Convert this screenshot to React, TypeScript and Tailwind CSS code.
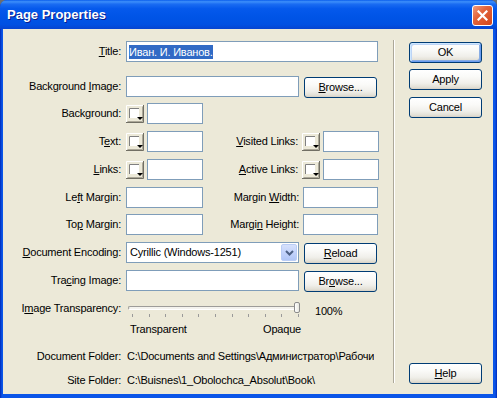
import React from "react";

function Btn({ children, def = false }: { children: React.ReactNode; def?: boolean }) {
  return (
    <div
      className={
        "flex h-[21px] w-[73px] shrink-0 items-center justify-center rounded-[3px] border border-[#003C74] bg-[linear-gradient(180deg,#FFFFFF_0%,#FAFAF8_35%,#F0EFEA_70%,#E3E0D6_90%,#D6D0C5_100%)] leading-none " +
        (def
          ? "[box-shadow:inset_1px_1px_0_#CEE7FF,inset_-1px_-1px_0_#6A9CF0,inset_2px_2px_0_#BCD4F6,inset_-2px_-2px_0_#89ADE4]"
          : "")
      }
    >
      <span>{children}</span>
    </div>
  );
}

function Input({ w }: { w: string }) {
  return <div className={"h-[21px] shrink-0 border border-[#7F9DB9] bg-white " + w} />;
}

function Swatch() {
  return (
    <svg width="18" height="18" viewBox="0 0 18 18" className="shrink-0">
      <rect x="0" y="0" width="18" height="18" fill="#ECE9D8" />
      <path d="M0.5 17 V0.5 H17" stroke="#FFFFFF" fill="none" />
      <path d="M0 17.5 H17.5 V0" stroke="#716F64" fill="none" />
      <path d="M1.5 16.5 H16.5 V1.5" stroke="#ACA899" fill="none" />
      <rect x="3" y="3" width="10" height="10" fill="#FFFFFF" />
      <path d="M3.5 13 V3.5 H13" stroke="#808080" fill="none" />
      <path d="M11 12 H17 L14 15 Z" fill="#000000" />
    </svg>
  );
}

function Label({ children, w = "w-[118px]" }: { children: React.ReactNode; w?: string }) {
  return <div className={"shrink-0 text-right leading-[13px] whitespace-nowrap " + w}>{children}</div>;
}

export default function App() {
  return (
    <div className="h-[398px] w-[497px] bg-[#6E6E6E] font-['Liberation_Sans',Arial,sans-serif] text-[11px] tracking-[-0.2px] text-black">
      <div className="flex h-full flex-col overflow-hidden rounded-t-[7px] bg-[linear-gradient(90deg,#0029B8_0px,#0A55E8_2px,#0A55E8_calc(100%-2px),#0029B8_100%)]">
        {/* Title bar */}
        <div className="flex h-[29px] shrink-0 items-start bg-[linear-gradient(180deg,#0A5DEC_0%,#3D8FFA_6%,#1A6CF2_14%,#0559EC_30%,#0054E6_60%,#0050E2_85%,#0644D0_100%)] pl-[7px] pr-[4px]">
          <div className="mt-[7px] text-[13px] font-bold leading-[16px] tracking-normal text-white [text-shadow:1px_1px_0_#0A1E8C]">
            Page Properties
          </div>
          <div className="ml-auto mt-[5px] flex h-[21px] w-[21px] items-center justify-center rounded-[3px] border border-white bg-[linear-gradient(135deg,#F09C7E_0%,#E2633B_40%,#D2461C_100%)]">
            <svg width="11" height="11" viewBox="0 0 11 11">
              <path d="M1.5 1.5 L9.5 9.5 M9.5 1.5 L1.5 9.5" stroke="#FFFFFF" strokeWidth="2.2" strokeLinecap="square" />
            </svg>
          </div>
        </div>

        {/* Client area */}
        <div className="mb-[4px] ml-[3px] mr-[4px] flex flex-1 bg-[#ECE9D8]">
          {/* Left panel */}
          <div className="flex w-[390px] shrink-0 flex-col">
            {/* Title */}
            <div className="mt-[12px] flex h-[21px] items-center gap-[5px]">
              <Label>
                <u>T</u>itle:
              </Label>
              <div className="flex h-[21px] w-[252px] shrink-0 items-center border border-[#7F9DB9] bg-white pl-[2px]">
                <span className="inline-block bg-[#316AC5] leading-[14px] text-white">Иван. И. Иванов.</span>
              </div>
            </div>
            {/* Background Image */}
            <div className="mt-[14px] flex h-[21px] items-center gap-[5px]">
              <Label>
                Background <u>I</u>mage:
              </Label>
              <Input w="w-[173px]" />
              <div className="mt-[2px]">
                <Btn>
                  <u>B</u>rowse...
                </Btn>
              </div>
            </div>
            {/* Background */}
            <div className="mt-[6px] flex h-[21px] items-center">
              <Label>Background:</Label>
              <div className="ml-[5px]">
                <Swatch />
              </div>
              <div className="ml-[3px]">
                <Input w="w-[56px]" />
              </div>
            </div>
            {/* Text / Visited */}
            <div className="mt-[7px] flex h-[21px] items-center">
              <Label>
                T<u>e</u>xt:
              </Label>
              <div className="ml-[5px]">
                <Swatch />
              </div>
              <div className="ml-[3px]">
                <Input w="w-[56px]" />
              </div>
              <Label w="w-[95px]">
                <u>V</u>isited Links:
              </Label>
              <div className="ml-[4px]">
                <Swatch />
              </div>
              <div className="ml-[3px]">
                <Input w="w-[56px]" />
              </div>
            </div>
            {/* Links / Active */}
            <div className="mt-[7px] flex h-[21px] items-center">
              <Label>
                <u>L</u>inks:
              </Label>
              <div className="ml-[5px]">
                <Swatch />
              </div>
              <div className="ml-[3px]">
                <Input w="w-[56px]" />
              </div>
              <Label w="w-[95px]">
                <u>A</u>ctive Links:
              </Label>
              <div className="ml-[4px]">
                <Swatch />
              </div>
              <div className="ml-[3px]">
                <Input w="w-[56px]" />
              </div>
            </div>
            {/* Left Margin / Margin Width */}
            <div className="mt-[7px] flex h-[21px] items-center">
              <Label>
                Le<u>f</u>t Margin:
              </Label>
              <div className="ml-[5px]">
                <Input w="w-[77px]" />
              </div>
              <Label w="w-[96px]">
                Margin <u>W</u>idth:
              </Label>
              <div className="ml-[4px]">
                <Input w="w-[75px]" />
              </div>
            </div>
            {/* Top Margin / Margin Height */}
            <div className="mt-[6px] flex h-[21px] items-center">
              <Label>
                To<u>p</u> Margin:
              </Label>
              <div className="ml-[5px]">
                <Input w="w-[77px]" />
              </div>
              <Label w="w-[96px]">
                Margi<u>n</u> Height:
              </Label>
              <div className="ml-[4px]">
                <Input w="w-[75px]" />
              </div>
            </div>
            {/* Document Encoding */}
            <div className="mt-[7px] flex h-[21px] items-center gap-[5px]">
              <Label>
                <u>D</u>ocument Encoding:
              </Label>
              <div className="flex h-[21px] w-[173px] shrink-0 items-center border border-[#7F9DB9] bg-white pl-[3px]">
                <span className="leading-[13px]">Cyrillic (Windows-1251)</span>
                <div className="ml-auto mr-[1px] flex h-[17px] w-[16px] items-center justify-center rounded-[2px] border border-[#BACDF6] bg-[linear-gradient(180deg,#D6E1FC_0%,#C3D3FB_50%,#B1C6F6_100%)]">
                  <svg width="9" height="6" viewBox="0 0 9 6">
                    <path d="M1 1 L4.5 4.5 L8 1" stroke="#4D6185" strokeWidth="2" fill="none" />
                  </svg>
                </div>
              </div>
              <div className="mt-[2px]">
                <Btn>
                  <u>R</u>eload
                </Btn>
              </div>
            </div>
            {/* Tracing Image */}
            <div className="mt-[7px] flex h-[21px] items-center gap-[5px]">
              <Label>
                Tra<u>c</u>ing Image:
              </Label>
              <Input w="w-[173px]" />
              <div className="mt-[2px]">
                <Btn>
                  Br<u>o</u>wse...
                </Btn>
              </div>
            </div>
            {/* Image Transparency */}
            <div className="mt-[11px] flex h-[12px] items-start">
              <Label>
                I<u>m</u>age Transparency:
              </Label>
              <div className="relative ml-[7px] h-[12px] w-[172px] shrink-0">
                <div className="mt-[4px] h-[4px] w-full rounded-[2px] border-t border-l border-[#9D9C99] border-b-white border-r-white border-b border-r bg-[#F4F3EE]" />
                <div className="absolute right-0 top-0 h-[11px] w-[6px] rounded-[2px] border border-[#8C8C8C] bg-[linear-gradient(90deg,#FFFFFF,#E8E8E0)]" />
              </div>
              <div className="ml-[15px] mt-[3px] leading-[12px]">100%</div>
            </div>
            {/* Ticks */}
            <div className="ml-[129px] flex h-[4px] w-[167px] justify-between">
              {Array.from({ length: 11 }).map((_, i) => (
                <div key={i} className="h-[3px] w-px bg-[#9A9A9A]" />
              ))}
            </div>
            {/* Scale labels */}
            <div className="ml-[127px] mt-[5px] flex h-[12px] w-[171px] justify-between leading-[12px]">
              <span>Transparent</span>
              <span>Opaque</span>
            </div>
            {/* Document Folder */}
            <div className="mt-[15px] flex h-[12px] items-center gap-[6px]">
              <Label>Document Folder:</Label>
              <div className="w-[247px] shrink-0 overflow-hidden whitespace-nowrap leading-[12px]">
                C:\Documents and Settings\Администратор\Рабочий стол\
              </div>
            </div>
            {/* Site Folder */}
            <div className="mt-[12px] flex h-[12px] items-center gap-[6px]">
              <Label>Site Folder:</Label>
              <div className="w-[247px] shrink-0 overflow-hidden whitespace-nowrap leading-[12px]">
                C:\Buisnes\1_Obolochca_Absolut\Book\
              </div>
            </div>
          </div>

          {/* Separator */}
          <div className="mt-[11px] h-[343px] w-[2px] shrink-0 border-l border-r border-l-[#ACA899] border-r-white" />

          {/* Right panel */}
          <div className="flex flex-1 flex-col pb-[10px] pl-[14px] pt-[13px]">
            <Btn def>OK</Btn>
            <div className="mt-[6px]">
              <Btn>Apply</Btn>
            </div>
            <div className="mt-[7px]">
              <Btn>Cancel</Btn>
            </div>
            <div className="mt-auto">
              <Btn>
                <u>H</u>elp
              </Btn>
            </div>
          </div>
        </div>
      </div>
    </div>
  );
}
